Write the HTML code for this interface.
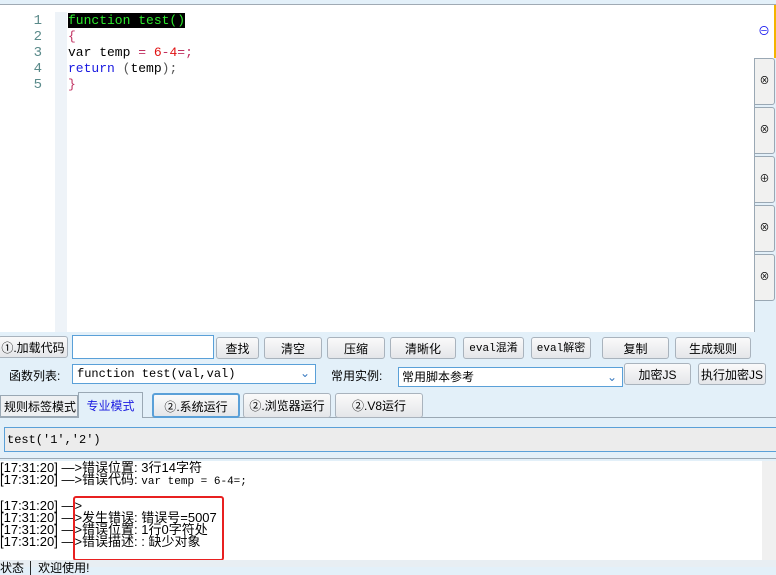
<!DOCTYPE html><html><head><style>
body{margin:0;width:776px;height:567px;background:#e3f0f9;position:relative;overflow:hidden;font-family:"Liberation Sans","Noto Sans CJK SC",sans-serif;font-size:12px;color:#000}
.a{position:absolute}
.btn{position:absolute;height:22px;border:1px solid #a9b3bd;border-radius:3px;background:linear-gradient(#fafafa,#e4e6e9);text-align:center;line-height:22px;font-size:12px;box-sizing:border-box}
.code{font-family:"Liberation Mono","Noto Sans CJK SC",monospace;font-size:13px;line-height:16px}
.tab{position:absolute;left:754px;width:21px;height:47px;border:1px solid #9aa8b4;background:#f1f1f0;box-sizing:border-box;border-radius:0 3px 3px 0;text-align:center;line-height:45px;font-size:10px}
.log{font-family:"Liberation Sans","Noto Sans CJK SC",sans-serif;font-size:13px;line-height:12px;white-space:pre}
</style></head><body>
<div class="a" style="left:0;top:4px;width:776px;height:1px;background:#a0aab4"></div>
<div class="a" style="left:0;top:5px;width:754px;height:327px;background:#fff;border-right:1px solid #9aa8b4"></div>
<div class="a" style="left:55px;top:12px;width:12px;height:320px;background:#eef3f8"></div>
<div class="a code" style="left:22px;top:13px;width:20px;text-align:right;color:#5a8a8a;font-size:14px">1<br>2<br>3<br>4<br>5</div>
<div class="a code" style="left:68px;top:13px;white-space:pre"><span style="background:#000;color:#2de82d">function test()</span>
<span style="color:#c03060">{</span>
var temp <span style="color:#c03060">=</span> <span style="color:#e01010">6</span><span style="color:#c03060">-</span><span style="color:#e01010">4</span><span style="color:#c03060">=;</span>
<span style="color:#1a1ae0">return</span> <span style="color:#555">(</span>temp<span style="color:#555">);</span>
<span style="color:#c03060">}</span></div>
<div class="a" style="left:754px;top:5px;width:20px;height:53px;background:#fff;border-right:2px solid #f4b400;color:#1a1af0;text-align:center;line-height:53px;font-size:12px">⊖</div>
<div class="tab" style="top:58px">⊗</div><div class="tab" style="top:107px">⊗</div><div class="tab" style="top:156px">⊕</div><div class="tab" style="top:205px">⊗</div><div class="tab" style="top:254px">⊗</div>

<div class="btn" style="left:-2px;top:336px;width:70px">①.加载代码</div>
<div class="a" style="left:72px;top:335px;width:140px;height:22px;border:1px solid #5aa0d8;background:#fff"></div>
<div class="btn" style="left:216px;top:337px;width:43px">查找</div>
<div class="btn" style="left:264px;top:337px;width:58px">清空</div>
<div class="btn" style="left:327px;top:337px;width:58px">压缩</div>
<div class="btn" style="left:390px;top:337px;width:66px">清晰化</div>
<div class="btn" style="left:463px;top:337px;width:61px;font-family:'Liberation Mono','Noto Sans CJK SC',monospace;font-size:11px">eval混淆</div>
<div class="btn" style="left:531px;top:337px;width:60px;font-family:'Liberation Mono','Noto Sans CJK SC',monospace;font-size:11px">eval解密</div>
<div class="btn" style="left:602px;top:337px;width:67px">复制</div>
<div class="btn" style="left:675px;top:337px;width:76px">生成规则</div>

<div class="a" style="left:9px;top:367px;font-size:12px">函数列表:</div>
<div class="a code" style="left:72px;top:364px;width:244px;height:20px;border:1px solid #5aa0d8;background:#fff;box-sizing:border-box;font-size:12px;line-height:18px;padding-left:4px">function test(val,val)<span style="position:absolute;right:5px;color:#3a7ac0">⌄</span></div>
<div class="a" style="left:331px;top:367px">常用实例:</div>
<div class="a" style="left:398px;top:367px;width:225px;height:20px;border:1px solid #5aa0d8;background:#fff;box-sizing:border-box;line-height:18px;padding-left:3px">常用脚本参考<span style="position:absolute;right:5px;color:#3a7ac0">⌄</span></div>
<div class="btn" style="left:624px;top:363px;width:67px">加密JS</div>
<div class="btn" style="left:698px;top:363px;width:68px">执行加密JS</div>

<div class="a" style="left:0;top:417px;width:776px;height:1px;background:#9aa8b4"></div>
<div class="a" style="left:0;top:395px;width:78px;height:22px;border:1px solid #9aa8b4;background:#eef0f2;box-sizing:border-box;line-height:22px;padding-left:3px">规则标签模式</div>
<div class="a" style="left:78px;top:392px;width:65px;height:26px;border:1px solid #9aa8b4;border-bottom:none;background:#e3f0f9;box-sizing:border-box;line-height:26px;text-align:center;color:#1a1ae0">专业模式</div>
<div class="btn" style="left:152px;top:393px;width:88px;height:25px;line-height:24px;border:2px solid #5aa0d8">②.系统运行</div>
<div class="btn" style="left:243px;top:393px;width:88px;height:25px;line-height:24px">②.浏览器运行</div>
<div class="btn" style="left:335px;top:393px;width:88px;height:25px;line-height:24px">②.V8运行</div>

<div class="a" style="left:4px;top:427px;width:772px;height:25px;background:#ececec;border-top:1px solid #5aa0d8;border-bottom:1px solid #5aa0d8;border-left:1px solid #5aa0d8;box-sizing:border-box;line-height:23px;padding-left:2px" ><span class="code" style="font-size:12px">test('1','2')</span></div>
<div class="a" style="left:0;top:458px;width:776px;height:1px;background:#9aa8b4"></div>

<div class="a" style="left:0;top:461px;width:762px;height:99px;background:#fff"></div>
<div class="a" style="left:762px;top:461px;width:14px;height:99px;background:#f0f0f0"></div>
<div class="a log" style="left:0;top:462px">[17:31:20] —>错误位置: 3行14字符
[17:31:20] —>错误代码: <span style="font-family:'Liberation Mono',monospace;font-size:11px">var temp = 6-4=;</span>

[17:31:20] —>
[17:31:20] —>发生错误: 错误号=5007
[17:31:20] —>错误位置: 1行0字符处
[17:31:20] —>错误描述: : 缺少对象</div>
<div class="a" style="left:73px;top:496px;width:147px;height:61px;border:2px solid #e82020;border-radius:3px"></div>
<div class="a" style="left:0;top:560px;width:776px;height:7px;background:#e8eef3"></div>
<div class="a" style="left:0;top:561px;font-size:12px;line-height:14px">状态 │ 欢迎使用!</div>
</body></html>
